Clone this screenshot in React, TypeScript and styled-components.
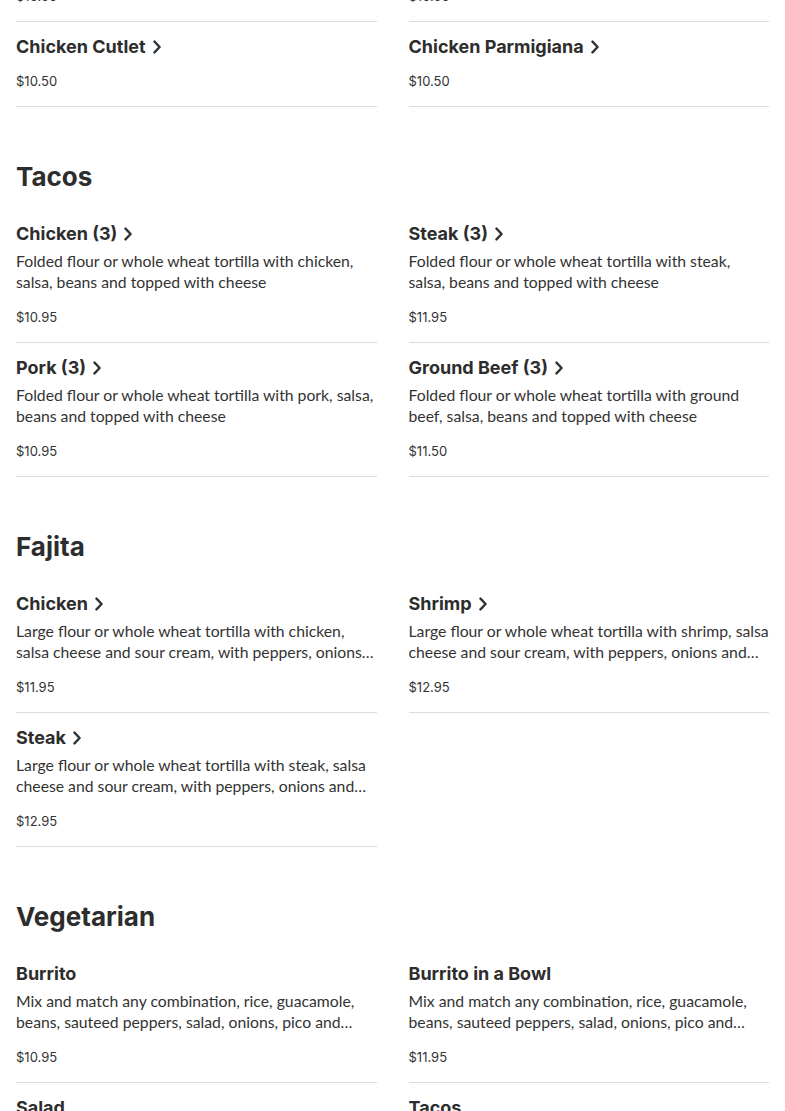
import React from "react";
import styled, { createGlobalStyle } from "styled-components";

const Global = createGlobalStyle`
  html, body { margin: 0; padding: 0; background: #fff; overflow: hidden; }
  body { font-family: Inter, "Open Sans", sans-serif; color: #2d2d2d; }
`;

type Item = { name: string; desc?: string; price: string; arrow?: boolean };
type Section = { title?: string; items: Item[] };

const sections: Section[] = [
  {
    items: [
      { name: "Chicken Francese", price: "$10.50", arrow: true },
      { name: "Chicken Marsala", price: "$10.50", arrow: true },
      { name: "Chicken Cutlet", price: "$10.50", arrow: true },
      { name: "Chicken Parmigiana", price: "$10.50", arrow: true },
    ],
  },
  {
    title: "Tacos",
    items: [
      { name: "Chicken (3)", desc: "Folded flour or whole wheat tortilla with chicken, salsa, beans and topped with cheese", price: "$10.95", arrow: true },
      { name: "Steak (3)", desc: "Folded flour or whole wheat tortilla with steak, salsa, beans and topped with cheese", price: "$11.95", arrow: true },
      { name: "Pork (3)", desc: "Folded flour or whole wheat tortilla with pork, salsa, beans and topped with cheese", price: "$10.95", arrow: true },
      { name: "Ground Beef (3)", desc: "Folded flour or whole wheat tortilla with ground beef, salsa, beans and topped with cheese", price: "$11.50", arrow: true },
    ],
  },
  {
    title: "Fajita",
    items: [
      { name: "Chicken", desc: "Large flour or whole wheat tortilla with chicken, salsa cheese and sour cream, with peppers, onions and tomatoes", price: "$11.95", arrow: true },
      { name: "Shrimp", desc: "Large flour or whole wheat tortilla with shrimp, salsa cheese and sour cream, with peppers, onions and tomatoes", price: "$12.95", arrow: true },
      { name: "Steak", desc: "Large flour or whole wheat tortilla with steak, salsa cheese and sour cream, with peppers, onions and tomatoes", price: "$12.95", arrow: true },
    ],
  },
  {
    title: "Vegetarian",
    items: [
      { name: "Burrito", desc: "Mix and match any combination, rice, guacamole, beans, sauteed peppers, salad, onions, pico and cheese", price: "$10.95" },
      { name: "Burrito in a Bowl", desc: "Mix and match any combination, rice, guacamole, beans, sauteed peppers, salad, onions, pico and cheese", price: "$11.95" },
      { name: "Salad", desc: "Mix and match any combination, rice, guacamole, beans, sauteed peppers, salad, onions, pico and cheese", price: "$10.95" },
      { name: "Tacos", desc: "Mix and match any combination, rice, guacamole, beans, sauteed peppers, salad, onions, pico and cheese", price: "$10.95" },
    ],
  },
];

const Page = styled.main`
  padding: 0 16px;
  margin-top: -63px;
`;

const SectionBlock = styled.section`
  & + & { margin-top: 52px; }
`;

const Heading = styled.h2`
  margin: 0 0 14px;
  font-size: 26px;
  line-height: 36px;
  font-weight: 700;
  color: #2d2d2d;
`;

const Grid = styled.div`
  display: grid;
  grid-template-columns: 1fr 1fr;
  column-gap: 32px;
`;

const Card = styled.article`
  padding: 13px 0 15px;
  border-bottom: 1px solid #dcdcdc;
  display: flex;
  flex-direction: column;
`;

const Title = styled.h3`
  margin: 0;
  display: flex;
  align-items: center;
  gap: 6px;
  font-size: 18px;
  line-height: 24px;
  font-weight: 700;
  color: #2d2d2d;
`;

const Desc = styled.p`
  margin: 4px 0 0;
  font-family: Lato, "Open Sans", sans-serif;
  font-size: 15.75px;
  line-height: 21px;
  color: #333;
  display: -webkit-box;
  -webkit-line-clamp: 2;
  -webkit-box-orient: vertical;
  overflow: hidden;
`;

const Price = styled.div<{ $afterDesc: boolean }>`
  margin-top: ${(p) => (p.$afterDesc ? "15px" : "12px")};
  font-size: 13px;
  line-height: 20px;
  color: #333;
`;

const Chevron = () => (
  <svg width="10" height="14" viewBox="0 0 10 14" aria-hidden>
    <polyline points="2.5,1.6 7.6,7 2.5,12.4" fill="none" stroke="#2f3437" strokeWidth="2.4" strokeLinecap="round" strokeLinejoin="round" />
  </svg>
);

export default function App() {
  return (
    <>
      <Global />
      <Page>
        {sections.map((s, i) => (
          <SectionBlock key={i}>
            {s.title && <Heading>{s.title}</Heading>}
            <Grid>
              {s.items.map((it) => (
                <Card key={it.name}>
                  <Title>
                    {it.name}
                    {it.arrow && <Chevron />}
                  </Title>
                  {it.desc && <Desc>{it.desc}</Desc>}
                  <Price $afterDesc={!!it.desc}>{it.price}</Price>
                </Card>
              ))}
            </Grid>
          </SectionBlock>
        ))}
      </Page>
    </>
  );
}
